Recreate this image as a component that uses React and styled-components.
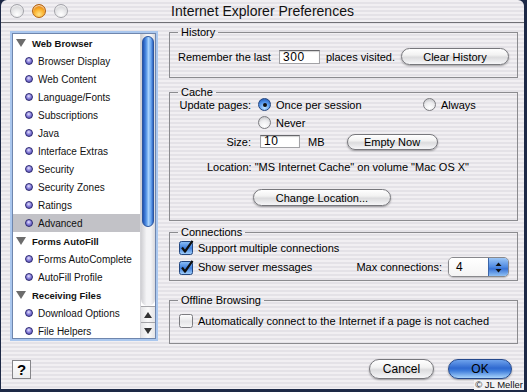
import styled, { createGlobalStyle } from 'styled-components';

const GlobalStyle = createGlobalStyle`
  html, body {
    margin: 0;
    padding: 0;
    background: #1d2946;
  }
  body {
    font-family: "Liberation Sans", Arial, sans-serif;
    color: #000;
  }
`;

const stripes = `repeating-linear-gradient(to bottom, #f1eff2 0px, #f1eff2 2px, #e4e2e7 2px, #e4e2e7 4px)`;

const Screen = styled.div`
  position: relative;
  width: 527px;
  height: 392px;
  overflow: hidden;
  background: #1d2946;
`;

const Window = styled.div`
  width: 523px;
  height: 389px;
  margin-left: 1px;
  border-radius: 6px 6px 0 0;
  background: ${stripes};
  display: flex;
  flex-direction: column;
  overflow: hidden;
`;

const TitleBar = styled.div`
  height: 22px;
  flex: none;
  border-bottom: 1px solid #707075;
  display: grid;
  grid-template-columns: 90px 1fr 90px;
  align-items: center;
`;

const Lights = styled.div`
  display: flex;
  gap: 8px;
  padding-left: 9px;
`;

const Light = styled.span`
  width: 14px;
  height: 14px;
  box-sizing: border-box;
  border-radius: 50%;
  border: 1px solid ${p => (p.$on ? '#b06010' : '#a2a2a8')};
  background: ${p =>
    p.$on
      ? 'radial-gradient(circle at 50% 78%, #ffe48a 0%, #fbb22e 45%, #e07a08 85%, #c86400 100%)'
      : 'radial-gradient(circle at 50% 78%, #ffffff 0%, #e8e8ea 45%, #c4c4c8 100%)'};
  box-shadow: inset 0 1px 1px rgba(255, 255, 255, 0.8);
`;

const Title = styled.div`
  text-align: center;
  font-size: 14px;
  line-height: 22px;
  color: #111;
`;

const Body = styled.div`
  display: flex;
  align-items: flex-start;
  padding-left: 11px;
  gap: 13px;
`;

const Sidebar = styled.div`
  margin-top: 10px;
  width: 144px;
  height: 306px;
  box-sizing: border-box;
  border: 1px solid #6f86ad;
  box-shadow: 0 0 0 2px #aac7ee;
  background: #fff;
  display: flex;
  overflow: hidden;
`;

const List = styled.div`
  flex: 1;
  display: flex;
  flex-direction: column;
  overflow: hidden;
`;

const Row = styled.div`
  height: 18px;
  flex: none;
  display: flex;
  align-items: center;
  padding-left: ${p => (p.$header ? 3 : 12)}px;
  background: ${p => (p.$selected ? '#c2c2c7' : 'transparent')};
  font-size: ${p => (p.$header ? 9.5 : 10)}px;
  font-weight: ${p => (p.$header ? 'bold' : 'normal')};
  white-space: nowrap;
  color: #111;
`;

const Triangle = styled.span`
  width: 0;
  height: 0;
  border-left: 5px solid transparent;
  border-right: 5px solid transparent;
  border-top: 8px solid #6c6c6c;
  margin-right: 6px;
`;

const Bullet = styled.span`
  width: 8px;
  height: 8px;
  box-sizing: border-box;
  border-radius: 50%;
  border: 1px solid #2c2870;
  background: radial-gradient(circle at 45% 35%, #e6e3ff 0%, #8a82dc 45%, #4740a6 100%);
  margin-right: 5px;
`;

const Scrollbar = styled.div`
  width: 14px;
  flex: none;
  display: flex;
  flex-direction: column;
  border-left: 1px solid #d4d4d8;
`;

const Track = styled.div`
  flex: 1;
  padding-top: 2px;
  border-radius: 0 0 7px 7px;
  background: linear-gradient(to right, #cfcfd3, #f4f4f6 40%, #f4f4f6 70%, #d9d9dd);
`;

const Thumb = styled.div`
  height: 191px;
  margin: 0 1px;
  box-sizing: border-box;
  border-radius: 6px;
  border: 1px solid #2b56a0;
  background: linear-gradient(to right, #1f52b4 0%, #4f8fe4 30%, #a9d3fc 55%, #6aa6ee 80%, #2d63c2 100%);
`;

const Arrow = styled.div`
  height: 16px;
  flex: none;
  box-sizing: border-box;
  border-top: 1px solid #a4a4a8;
  background: linear-gradient(to right, #e4e4e6, #fafafa 50%, #e4e4e6);
  display: flex;
  align-items: center;
  justify-content: center;

  &::before {
    content: '';
    border-left: 4px solid transparent;
    border-right: 4px solid transparent;
    ${p => (p.$up ? 'border-bottom: 6px solid #333;' : 'border-top: 6px solid #333;')}
  }
`;

const Column = styled.div`
  width: 349px;
  margin-top: 3px;
  display: flex;
  flex-direction: column;
`;

const Group = styled.fieldset`
  margin: ${p => p.$mt || 0}px 0 0 0;
  padding: 0 8px;
  height: ${p => p.$h}px;
  box-sizing: border-box;
  border: 1px solid #8b8b8f;
  min-width: 0;
  font-size: 11px;
`;

const Legend = styled.legend`
  padding: 0 3px;
  margin: 0;
  font-size: 11px;
  line-height: 12px;
  color: #000;
`;

const Line = styled.div`
  display: flex;
  align-items: center;
  height: ${p => p.$h || 13}px;
  margin-top: ${p => p.$mt || 0}px;
  padding-left: ${p => p.$pl || 0}px;
  white-space: nowrap;
`;

const Label = styled.span`
  width: 73px;
  margin-right: 7px;
  text-align: right;
  flex: none;
`;

const Option = styled.span`
  display: flex;
  align-items: center;
  width: ${p => (p.$w ? `${p.$w}px` : 'auto')};
  flex: none;
`;

const Radio = styled.span`
  position: relative;
  width: 13px;
  height: 13px;
  box-sizing: border-box;
  border-radius: 50%;
  margin-right: 5px;
  flex: none;
  border: 1px solid ${p => (p.$on ? '#22457f' : '#7c7c80')};
  background: ${p =>
    p.$on
      ? 'radial-gradient(circle at 50% 80%, #bfe2ff 0%, #4f92ea 55%, #1d4fa8 100%)'
      : 'radial-gradient(circle at 50% 78%, #ffffff 0%, #ececee 50%, #b8b8bc 100%)'};

  &::after {
    content: '';
    display: ${p => (p.$on ? 'block' : 'none')};
    position: absolute;
    left: 3.5px;
    top: 3.5px;
    width: 4px;
    height: 4px;
    border-radius: 50%;
    background: #111;
  }
`;

const Field = styled.div`
  width: ${p => p.$w}px;
  height: ${p => p.$h}px;
  margin-left: ${p => p.$ml || 0}px;
  box-sizing: border-box;
  flex: none;
  background: #fff;
  border: 1px solid #a2a2a6;
  border-top-color: #66666a;
  box-shadow: inset 0 1px 1px rgba(0, 0, 0, 0.18);
  padding-left: 3px;
  font-size: 12px;
  line-height: ${p => p.$h - 2}px;
  letter-spacing: 0.6px;
`;

const Text = styled.span`
  margin-left: ${p => (p.$auto ? 'auto' : `${p.$ml || 0}px`)};
  margin-right: ${p => p.$mr || 0}px;
`;

const Capsule = styled.button`
  width: ${p => p.$w}px;
  height: ${p => p.$h || 17}px;
  margin-left: ${p => (p.$auto ? 'auto' : `${p.$ml || 0}px`)};
  flex: none;
  padding: 0;
  border-radius: 10px;
  border: 1px solid ${p => (p.$primary ? '#25498c' : '#77777c')};
  background: ${p =>
    p.$primary
      ? 'linear-gradient(to bottom, #6ea2ec 0%, #2f69d0 45%, #3f7ddb 60%, #a9d4fb 100%)'
      : 'linear-gradient(to bottom, #ffffff 0%, #f2f2f2 40%, #dcdcde 55%, #f6f6f8 100%)'};
  box-shadow: 0 1px 2px rgba(0, 0, 0, 0.35);
  font-family: inherit;
  font-size: ${p => p.$fs || 11}px;
  color: #000;
`;

const Popup = styled.div`
  width: 61px;
  height: 20px;
  flex: none;
  box-sizing: border-box;
  display: flex;
  border: 1px solid #88888c;
  border-radius: 5px;
  overflow: hidden;
  box-shadow: 0 1px 1px rgba(0, 0, 0, 0.2);
`;

const PopupValue = styled.span`
  flex: 1;
  background: linear-gradient(to bottom, #ffffff, #f4f4f4);
  padding-left: 7px;
  font-size: 12px;
  line-height: 18px;
`;

const PopupCap = styled.span`
  width: 19px;
  display: flex;
  align-items: center;
  justify-content: center;
  border-left: 1px solid #3a64a8;
  background: linear-gradient(to bottom, #9cc6f6 0%, #4f8ae2 50%, #3a74d6 60%, #8fc0f4 100%);
`;

const Footer = styled.div`
  display: flex;
  align-items: center;
  height: 20px;
  margin-top: 15px;
  padding: 0 12px 0 11px;
`;

const Help = styled.div`
  width: 19px;
  height: 19px;
  box-sizing: border-box;
  border: 1px solid #858589;
  background: linear-gradient(to bottom, #ffffff, #ececee);
  display: flex;
  align-items: center;
  justify-content: center;
  font-size: 15px;
  font-weight: bold;
  margin-right: auto;
`;

const Watermark = styled.div`
  position: absolute;
  right: 3px;
  bottom: 2px;
  padding: 0 1px;
  background: #f3f3f5;
  font-size: 9.5px;
  line-height: 10px;
  color: #111;
`;

const BoxIcon = styled.svg`
  flex: none;
  margin: 0 4px 0 1px;
`;

const CheckBox = ({ checked }) => (
  <BoxIcon width="15" height="15" viewBox="0 0 15 15">
    <defs>
      <linearGradient id="cbOn" x1="0" y1="0" x2="0" y2="1">
        <stop offset="0" stopColor="#8ec0f6" />
        <stop offset="0.5" stopColor="#3f7fde" />
        <stop offset="1" stopColor="#a6d2fb" />
      </linearGradient>
      <linearGradient id="cbOff" x1="0" y1="0" x2="0" y2="1">
        <stop offset="0" stopColor="#ffffff" />
        <stop offset="0.55" stopColor="#e6e6e8" />
        <stop offset="1" stopColor="#f8f8f8" />
      </linearGradient>
    </defs>
    <rect x="0.5" y="1.5" width="13" height="13" rx="2" fill={checked ? 'url(#cbOn)' : 'url(#cbOff)'} stroke={checked ? '#23467f' : '#7c7c80'} />
    {checked && <path d="M3 7.5 L6 11.5 L13.5 0.8" fill="none" stroke="#101010" strokeWidth="2.2" strokeLinejoin="round" />}
  </BoxIcon>
);

const Updown = () => (
  <svg width="7" height="11" viewBox="0 0 7 11">
    <path d="M3.5 0.5 L6.5 4 L0.5 4 Z" fill="#111" />
    <path d="M3.5 10.5 L6.5 7 L0.5 7 Z" fill="#111" />
  </svg>
);

const sections = [
  { title: 'Web Browser', items: ['Browser Display', 'Web Content', 'Language/Fonts', 'Subscriptions', 'Java', 'Interface Extras', 'Security', 'Security Zones', 'Ratings', 'Advanced'] },
  { title: 'Forms AutoFill', items: ['Forms AutoComplete', 'AutoFill Profile'] },
  { title: 'Receiving Files', items: ['Download Options', 'File Helpers'] },
];

export default function App() {
  return (
    <Screen>
      <GlobalStyle />
      <Window>
        <TitleBar>
          <Lights>
            <Light />
            <Light $on />
            <Light />
          </Lights>
          <Title>Internet Explorer Preferences</Title>
          <span />
        </TitleBar>

        <Body>
          <Sidebar>
            <List>
              {sections.map(s => (
                <div key={s.title}>
                  <Row $header>
                    <Triangle />
                    {s.title}
                  </Row>
                  {s.items.map(item => (
                    <Row key={item} $selected={item === 'Advanced'}>
                      <Bullet />
                      {item}
                    </Row>
                  ))}
                </div>
              ))}
            </List>
            <Scrollbar>
              <Track>
                <Thumb />
              </Track>
              <Arrow $up />
              <Arrow />
            </Scrollbar>
          </Sidebar>

          <Column>
            <Group $h={52}>
              <Legend>History</Legend>
              <Line $h={17} $mt={10}>
                <Text>Remember the last</Text>
                <Field $w={41} $h={14} $ml={8}>300</Field>
                <Text $ml={6}>places visited.</Text>
                <Capsule $w={108} $auto>Clear History</Capsule>
              </Line>
            </Group>

            <Group $h={135} $mt={8}>
              <Legend>Cache</Legend>
              <Line>
                <Label>Update pages:</Label>
                <Option $w={165}>
                  <Radio $on />
                  Once per session
                </Option>
                <Option>
                  <Radio />
                  Always
                </Option>
              </Line>
              <Line $mt={5}>
                <Label />
                <Option>
                  <Radio />
                  Never
                </Option>
              </Line>
              <Line $h={17} $mt={4}>
                <Label>Size:</Label>
                <Field $w={40} $h={13} $ml={2}>10</Field>
                <Text $ml={8}>MB</Text>
                <Capsule $w={91} $h={16} $ml={22}>Empty Now</Capsule>
              </Line>
              <Line $h={12} $mt={11} $pl={29}>
                Location: "MS Internet Cache" on volume "Mac OS X"
              </Line>
              <Line $h={17} $mt={16} $pl={75}>
                <Capsule $w={138}>Change Location...</Capsule>
              </Line>
            </Group>

            <Group $h={55} $mt={5}>
              <Legend>Connections</Legend>
              <Line $mt={3}>
                <CheckBox checked />
                Support multiple connections
              </Line>
              <Line $h={20} $mt={3}>
                <CheckBox checked />
                Show server messages
                <Text $auto $mr={6}>Max connections:</Text>
                <Popup>
                  <PopupValue>4</PopupValue>
                  <PopupCap>
                    <Updown />
                  </PopupCap>
                </Popup>
              </Line>
            </Group>

            <Group $h={50} $mt={13}>
              <Legend>Offline Browsing</Legend>
              <Line $mt={8}>
                <CheckBox />
                Automatically connect to the Internet if a page is not cached
              </Line>
            </Group>
          </Column>
        </Body>

        <Footer>
          <Help>?</Help>
          <Capsule $w={65} $h={20} $fs={12}>Cancel</Capsule>
          <Capsule $w={64} $h={20} $fs={12} $ml={14} $primary>OK</Capsule>
        </Footer>
      </Window>
      <Watermark>© JL Meller</Watermark>
    </Screen>
  );
}
